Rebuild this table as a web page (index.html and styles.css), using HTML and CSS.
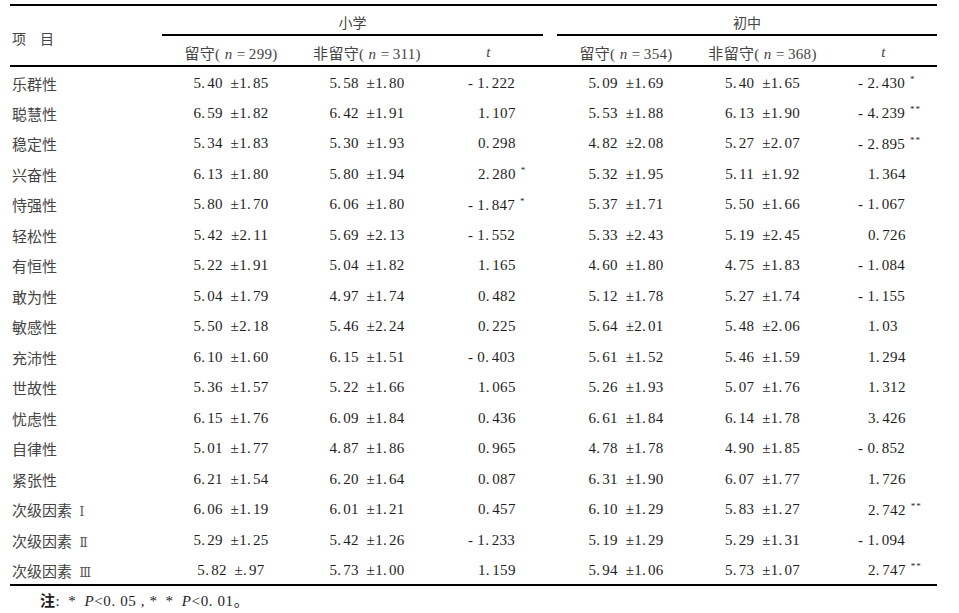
FILE: index.html
```html
<!DOCTYPE html>
<html lang="zh">
<head>
<meta charset="utf-8">
<title>表</title>
<link rel="stylesheet" href="styles.css">
</head>
<body>
<div class="page">
<table class="data">
<colgroup>
<col class="c-label"><col class="c-val"><col class="c-val2"><col class="c-t1"><col class="c-gap"><col class="c-val"><col class="c-val3"><col class="c-t2">
</colgroup>
<thead>
<tr class="h1">
<th rowspan="2" class="lab">项　目</th>
<th colspan="3" class="grp">小学</th>
<th class="gap"></th>
<th colspan="3" class="grp">初中</th>
</tr>
<tr class="h2">
<th class="sub">留守(&thinsp;<i>n</i>&thinsp;=&thinsp;299)</th>
<th class="sub">非留守(&thinsp;<i>n</i>&thinsp;=&thinsp;311)</th>
<th class="sub"><i>t</i></th>
<th class="gap"></th>
<th class="sub">留守(&thinsp;<i>n</i>&thinsp;=&thinsp;354)</th>
<th class="sub">非留守(&thinsp;<i>n</i>&thinsp;=&thinsp;368)</th>
<th class="sub"><i>t</i></th>
</tr>
</thead>
<tbody>
<tr><td class="lab">乐群性</td><td class="v">5. 40&ensp;±1. 85</td><td class="v">5. 58&ensp;±1. 80</td><td class="t t1"><span class="neg">- </span>1. 222</td><td></td><td class="v">5. 09&ensp;±1. 69</td><td class="v">5. 40&ensp;±1. 65</td><td class="t t2"><span class="neg">- </span>2. 430<span class="sig">*</span></td></tr>
<tr><td class="lab">聪慧性</td><td class="v">6. 59&ensp;±1. 82</td><td class="v">6. 42&ensp;±1. 91</td><td class="t t1">1. 107</td><td></td><td class="v">5. 53&ensp;±1. 88</td><td class="v">6. 13&ensp;±1. 90</td><td class="t t2"><span class="neg">- </span>4. 239<span class="sig">**</span></td></tr>
<tr><td class="lab">稳定性</td><td class="v">5. 34&ensp;±1. 83</td><td class="v">5. 30&ensp;±1. 93</td><td class="t t1">0. 298</td><td></td><td class="v">4. 82&ensp;±2. 08</td><td class="v">5. 27&ensp;±2. 07</td><td class="t t2"><span class="neg">- </span>2. 895<span class="sig">**</span></td></tr>
<tr><td class="lab">兴奋性</td><td class="v">6. 13&ensp;±1. 80</td><td class="v">5. 80&ensp;±1. 94</td><td class="t t1">2. 280<span class="sig">*</span></td><td></td><td class="v">5. 32&ensp;±1. 95</td><td class="v">5. 11&ensp;±1. 92</td><td class="t t2">1. 364</td></tr>
<tr><td class="lab">恃强性</td><td class="v">5. 80&ensp;±1. 70</td><td class="v">6. 06&ensp;±1. 80</td><td class="t t1"><span class="neg">- </span>1. 847<span class="sig">*</span></td><td></td><td class="v">5. 37&ensp;±1. 71</td><td class="v">5. 50&ensp;±1. 66</td><td class="t t2"><span class="neg">- </span>1. 067</td></tr>
<tr><td class="lab">轻松性</td><td class="v">5. 42&ensp;±2. 11</td><td class="v">5. 69&ensp;±2. 13</td><td class="t t1"><span class="neg">- </span>1. 552</td><td></td><td class="v">5. 33&ensp;±2. 43</td><td class="v">5. 19&ensp;±2. 45</td><td class="t t2">0. 726</td></tr>
<tr><td class="lab">有恒性</td><td class="v">5. 22&ensp;±1. 91</td><td class="v">5. 04&ensp;±1. 82</td><td class="t t1">1. 165</td><td></td><td class="v">4. 60&ensp;±1. 80</td><td class="v">4. 75&ensp;±1. 83</td><td class="t t2"><span class="neg">- </span>1. 084</td></tr>
<tr><td class="lab">敢为性</td><td class="v">5. 04&ensp;±1. 79</td><td class="v">4. 97&ensp;±1. 74</td><td class="t t1">0. 482</td><td></td><td class="v">5. 12&ensp;±1. 78</td><td class="v">5. 27&ensp;±1. 74</td><td class="t t2"><span class="neg">- </span>1. 155</td></tr>
<tr><td class="lab">敏感性</td><td class="v">5. 50&ensp;±2. 18</td><td class="v">5. 46&ensp;±2. 24</td><td class="t t1">0. 225</td><td></td><td class="v">5. 64&ensp;±2. 01</td><td class="v">5. 48&ensp;±2. 06</td><td class="t t2">1. 03</td></tr>
<tr><td class="lab">充沛性</td><td class="v">6. 10&ensp;±1. 60</td><td class="v">6. 15&ensp;±1. 51</td><td class="t t1"><span class="neg">- </span>0. 403</td><td></td><td class="v">5. 61&ensp;±1. 52</td><td class="v">5. 46&ensp;±1. 59</td><td class="t t2">1. 294</td></tr>
<tr><td class="lab">世故性</td><td class="v">5. 36&ensp;±1. 57</td><td class="v">5. 22&ensp;±1. 66</td><td class="t t1">1. 065</td><td></td><td class="v">5. 26&ensp;±1. 93</td><td class="v">5. 07&ensp;±1. 76</td><td class="t t2">1. 312</td></tr>
<tr><td class="lab">忧虑性</td><td class="v">6. 15&ensp;±1. 76</td><td class="v">6. 09&ensp;±1. 84</td><td class="t t1">0. 436</td><td></td><td class="v">6. 61&ensp;±1. 84</td><td class="v">6. 14&ensp;±1. 78</td><td class="t t2">3. 426</td></tr>
<tr><td class="lab">自律性</td><td class="v">5. 01&ensp;±1. 77</td><td class="v">4. 87&ensp;±1. 86</td><td class="t t1">0. 965</td><td></td><td class="v">4. 78&ensp;±1. 78</td><td class="v">4. 90&ensp;±1. 85</td><td class="t t2"><span class="neg">- </span>0. 852</td></tr>
<tr><td class="lab">紧张性</td><td class="v">6. 21&ensp;±1. 54</td><td class="v">6. 20&ensp;±1. 64</td><td class="t t1">0. 087</td><td></td><td class="v">6. 31&ensp;±1. 90</td><td class="v">6. 07&ensp;±1. 77</td><td class="t t2">1. 726</td></tr>
<tr><td class="lab">次级因素&ensp;<span class="rn">Ⅰ</span></td><td class="v">6. 06&ensp;±1. 19</td><td class="v">6. 01&ensp;±1. 21</td><td class="t t1">0. 457</td><td></td><td class="v">6. 10&ensp;±1. 29</td><td class="v">5. 83&ensp;±1. 27</td><td class="t t2">2. 742<span class="sig">**</span></td></tr>
<tr><td class="lab">次级因素&ensp;<span class="rn">Ⅱ</span></td><td class="v">5. 29&ensp;±1. 25</td><td class="v">5. 42&ensp;±1. 26</td><td class="t t1"><span class="neg">- </span>1. 233</td><td></td><td class="v">5. 19&ensp;±1. 29</td><td class="v">5. 29&ensp;±1. 31</td><td class="t t2"><span class="neg">- </span>1. 094</td></tr>
<tr><td class="lab">次级因素&ensp;<span class="rn">Ⅲ</span></td><td class="v">5. 82&ensp;±. 97</td><td class="v">5. 73&ensp;±1. 00</td><td class="t t1">1. 159</td><td></td><td class="v">5. 94&ensp;±1. 06</td><td class="v">5. 73&ensp;±1. 07</td><td class="t t2">2. 747<span class="sig">**</span></td></tr>
</tbody>
</table>
<p class="note"><b>注</b>: &thinsp;*&ensp;<i>P</i>&lt;0. 05 , *&ensp;*&ensp;<i>P</i>&lt;0. 01。</p>
</div>
</body>
</html>
```
FILE: styles.css
```css
html, body {
  margin: 0;
  padding: 0;
  background: #fff;
}
.page {
  padding: 4px 0 0 10px;
  font-family: "Liberation Serif", "Noto Sans CJK SC", serif;
  color: #1e1e1e;
}
.data {
  width: 927px;
  table-layout: fixed;
  border-collapse: collapse;
  border-top: 2px solid #000;
  border-bottom: 2px solid #000;
  font-size: 15px;
}
.c-label { width: 152px; }
.c-val { width: 138px; }
.c-val2 { width: 134px; }
.c-val3 { width: 135px; }
.c-t1 { width: 109px; }
.c-gap { width: 14px; }
.c-t2 { width: 107px; }
th, td {
  padding: 0;
  font-weight: normal;
  white-space: nowrap;
}
th {
  color: #444;
}
.h1 { height: 30px; }
.h1 th { padding-top: 4px; }
.h1 th.grp {
  border-bottom: 2px solid #000;
  font-family: "Noto Sans CJK SC", sans-serif;
  font-size: 14px;
  text-align: center;
}
.h2 { height: 31px; }
.h2 th {
  border-bottom: 2px solid #000;
  padding-top: 3px;
  text-align: center;
}
th.lab {
  text-align: left;
  padding-left: 2px;
  font-family: "Noto Sans CJK SC", sans-serif;
  font-size: 14px;
  border-bottom: 2px solid #000;
}
.sub {
  font-size: 15px;
  letter-spacing: 0.3px;
}
.sub i {
  font-family: "Liberation Serif", serif;
  padding: 0 1px;
}
tbody tr { height: 30.5px; }
tbody td { padding-top: 3px; }
td.lab {
  padding-left: 2px;
  font-family: "Noto Sans CJK SC", sans-serif;
  color: #444;
}
.rn {
  font-family: "DejaVu Serif", serif;
  font-size: 12px;
  color: #555;
}
td.v {
  text-align: center;
  letter-spacing: 0.3px;
  word-spacing: -2.1px;
}
td.t {
  text-align: left;
  letter-spacing: 0.3px;
  word-spacing: -1.6px;
}
td.t1 { padding-left: 44px; }
td.t2 { padding-left: 38px; }
.neg {
  margin-left: -10px;
  word-spacing: 0;
}
.sig {
  font-size: 9px;
  vertical-align: 6px;
  margin-left: 5px;
  letter-spacing: 1px;
}
.note {
  margin: 3px 0 0 30px;
  font-size: 15px;
  letter-spacing: 0.6px;
  word-spacing: 0;
  color: #1e1e1e;
}
.note b {
  font-family: "Noto Sans CJK SC", sans-serif;
  font-weight: bold;
  font-size: 15px;
}
```
